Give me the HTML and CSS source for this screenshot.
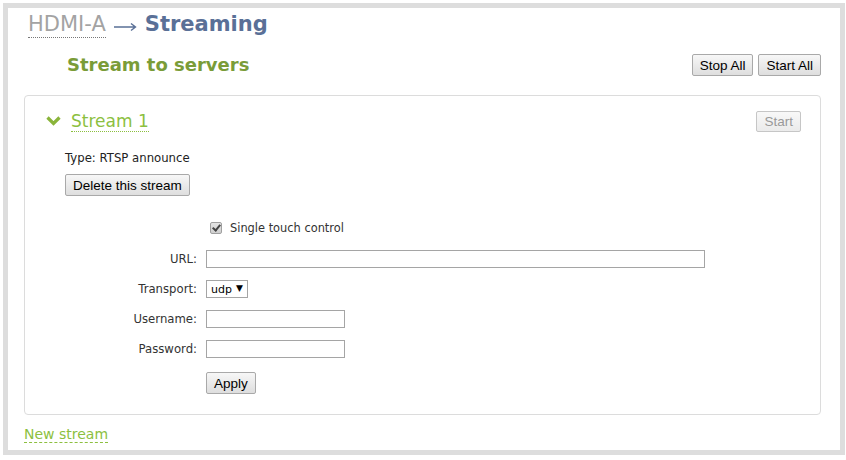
FILE: index.html
```html
<!DOCTYPE html>
<html lang="en">
<head>
    <meta charset="UTF-8">
    <title>HDMI-A - Streaming</title>
    <link rel="stylesheet" href="styles.css">
</head>
<body>
    <div class="frame">
        <h1 class="page-title">
            <a class="crumb" href="#">HDMI-A</a>
            <svg class="arrow" width="23" height="10" viewBox="0 0 23 10">
                <path d="M0 5 H21.5 M17 1.5 L21.5 5 L17 8.5" fill="none" stroke="#5a7097" stroke-width="1.4"/>
            </svg>
            <span class="current">Streaming</span>
        </h1>

        <div class="section-head">
            <h2>Stream to servers</h2>
            <div class="head-buttons">
                <button class="btn">Stop All</button>
                <button class="btn">Start All</button>
            </div>
        </div>

        <div class="stream-panel">
            <div class="stream-head">
                <svg class="chevron" width="15" height="10" viewBox="0 0 15 10">
                    <path d="M1.5 1.5 L7.5 7.5 L13.5 1.5" fill="none" stroke="#8ab43a" stroke-width="3.2"/>
                </svg>
                <span class="stream-title"><a class="stream-name" href="#">Stream 1</a></span>
                <button class="btn btn-small" disabled>Start</button>
            </div>

            <div class="stream-type">Type: RTSP announce</div>
            <button class="btn">Delete this stream</button>

            <div class="stream-form">
                <div class="form-row">
                    <span class="form-label"></span>
                    <label class="check">
                        <input type="checkbox" checked disabled>
                        Single touch control
                    </label>
                </div>
                <div class="form-row">
                    <label class="form-label">URL:</label>
                    <input class="field field-wide" type="text">
                </div>
                <div class="form-row">
                    <label class="form-label">Transport:</label>
                    <span class="select-wrap">
                        <select class="select">
                            <option>udp</option>
                            <option>tcp</option>
                        </select>
                    </span>
                </div>
                <div class="form-row">
                    <label class="form-label">Username:</label>
                    <input class="field" type="text">
                </div>
                <div class="form-row">
                    <label class="form-label">Password:</label>
                    <input class="field" type="password">
                </div>
                <div class="form-row form-actions">
                    <span class="form-label"></span>
                    <button class="btn">Apply</button>
                </div>
            </div>
        </div>

        <a class="new-stream" href="#">New stream</a>
    </div>
</body>
</html>
```

FILE: styles.css
```css
:root {
    --title-blue: #5a7097;
    --green: #7a9c38;
    --link-green: #8cbf3f;
    --text-color: #222;
}

body {
    margin: 0;
    font-family: "DejaVu Sans", Verdana, sans-serif;
    background: white;
}

.frame {
    margin: 3px;
    height: 442px;
    border: 5px solid #dddddd;
    padding: 0 19px 0 16px;
    box-sizing: content-box;
    width: 797px;
}

.page-title {
    display: flex;
    align-items: baseline;
    margin: 0;
    padding: 3px 0 0 4px;
    height: 31px;
    font-size: 21px;
    line-height: 26px;
    font-weight: normal;
}

.crumb {
    color: #a3a3a3;
    text-decoration: none;
    border-bottom: 1px dotted #777;
}

.arrow {
    align-self: center;
    margin: 1px 8px 0 8px;
}

.current {
    color: var(--title-blue);
    font-weight: bold;
}

.section-head {
    display: flex;
    justify-content: space-between;
    align-items: flex-start;
    height: 53px;
}

.section-head h2 {
    margin: 10px 0 0 43px;
    font-size: 18px;
    line-height: 26px;
    color: var(--green);
}

.head-buttons {
    display: flex;
    gap: 5px;
    margin-top: 12px;
}

.btn {
    font-family: "Liberation Sans", Arial, sans-serif;
    font-size: 13.5px;
    color: #000;
    padding: 0 7px;
    height: 22px;
    border: 1px solid #a9a9a9;
    border-radius: 2px;
    background: linear-gradient(#f7f7f7, #dedede);
}

.btn:disabled {
    color: #999;
    border-color: #c6c6c6;
    background: linear-gradient(#f8f8f8, #ebebeb);
}

.btn-small {
    height: 21px;
}

.stream-panel {
    border: 1px solid #dcdcdc;
    border-radius: 4px;
    padding: 13px 19px 19px 40px;
    height: 286px;
}

.stream-head {
    display: flex;
    align-items: center;
    margin-left: -19px;
    height: 24px;
}

.chevron {
    margin-right: 10px;
}

.stream-title {
    flex: 1;
}

.stream-name {
    font-size: 17px;
    color: var(--link-green);
    text-decoration: none;
    border-bottom: 1px dotted #8cbf3f;
}

.stream-type {
    margin: 18px 0 9px;
    font-size: 11.7px;
    color: var(--text-color);
}

.stream-form {
    margin-top: 18px;
}

.form-row {
    display: flex;
    align-items: center;
    height: 30px;
    font-size: 11.7px;
    color: #333;
}

.form-label {
    width: 132px;
    text-align: right;
    padding-right: 9px;
}

.check {
    display: flex;
    align-items: center;
    gap: 8px;
    margin-top: -3px;
    font-size: 11.4px;
}

.check input {
    appearance: none;
    position: relative;
    margin: 0 0 0 4px;
    width: 12px;
    height: 12px;
    border: 1px solid #a0a0a0;
    border-radius: 2px;
    background: linear-gradient(#e4e4e4, #cfcfcf);
}

.check input:checked::after {
    content: "";
    position: absolute;
    left: 3px;
    top: 0;
    width: 3px;
    height: 6px;
    border: solid #444;
    border-width: 0 2px 2px 0;
    transform: rotate(40deg);
}

.field {
    width: 139px;
    height: 18px;
    box-sizing: border-box;
    border: 1px solid #a5a5a5;
    padding: 1px 3px;
}

.field-wide {
    width: 499px;
}

.select-wrap {
    position: relative;
    display: flex;
}

.select {
    appearance: none;
    width: 42px;
    height: 18px;
    font-family: "DejaVu Sans", Verdana, sans-serif;
    font-size: 11px;
    padding: 0 0 0 4px;
    border: 1px solid #a5a5a5;
    background: white;
    color: #000;
}

.select-wrap::after {
    content: "\25BC";
    position: absolute;
    right: 5px;
    top: 3px;
    font-size: 9px;
    color: #000;
    pointer-events: none;
}

.form-actions {
    margin-top: 4px;
}

.new-stream {
    display: inline-block;
    margin-top: 11px;
    font-size: 14px;
    color: var(--link-green);
    text-decoration: none;
    border-bottom: 1px dashed #8cbf3f;
}
```
